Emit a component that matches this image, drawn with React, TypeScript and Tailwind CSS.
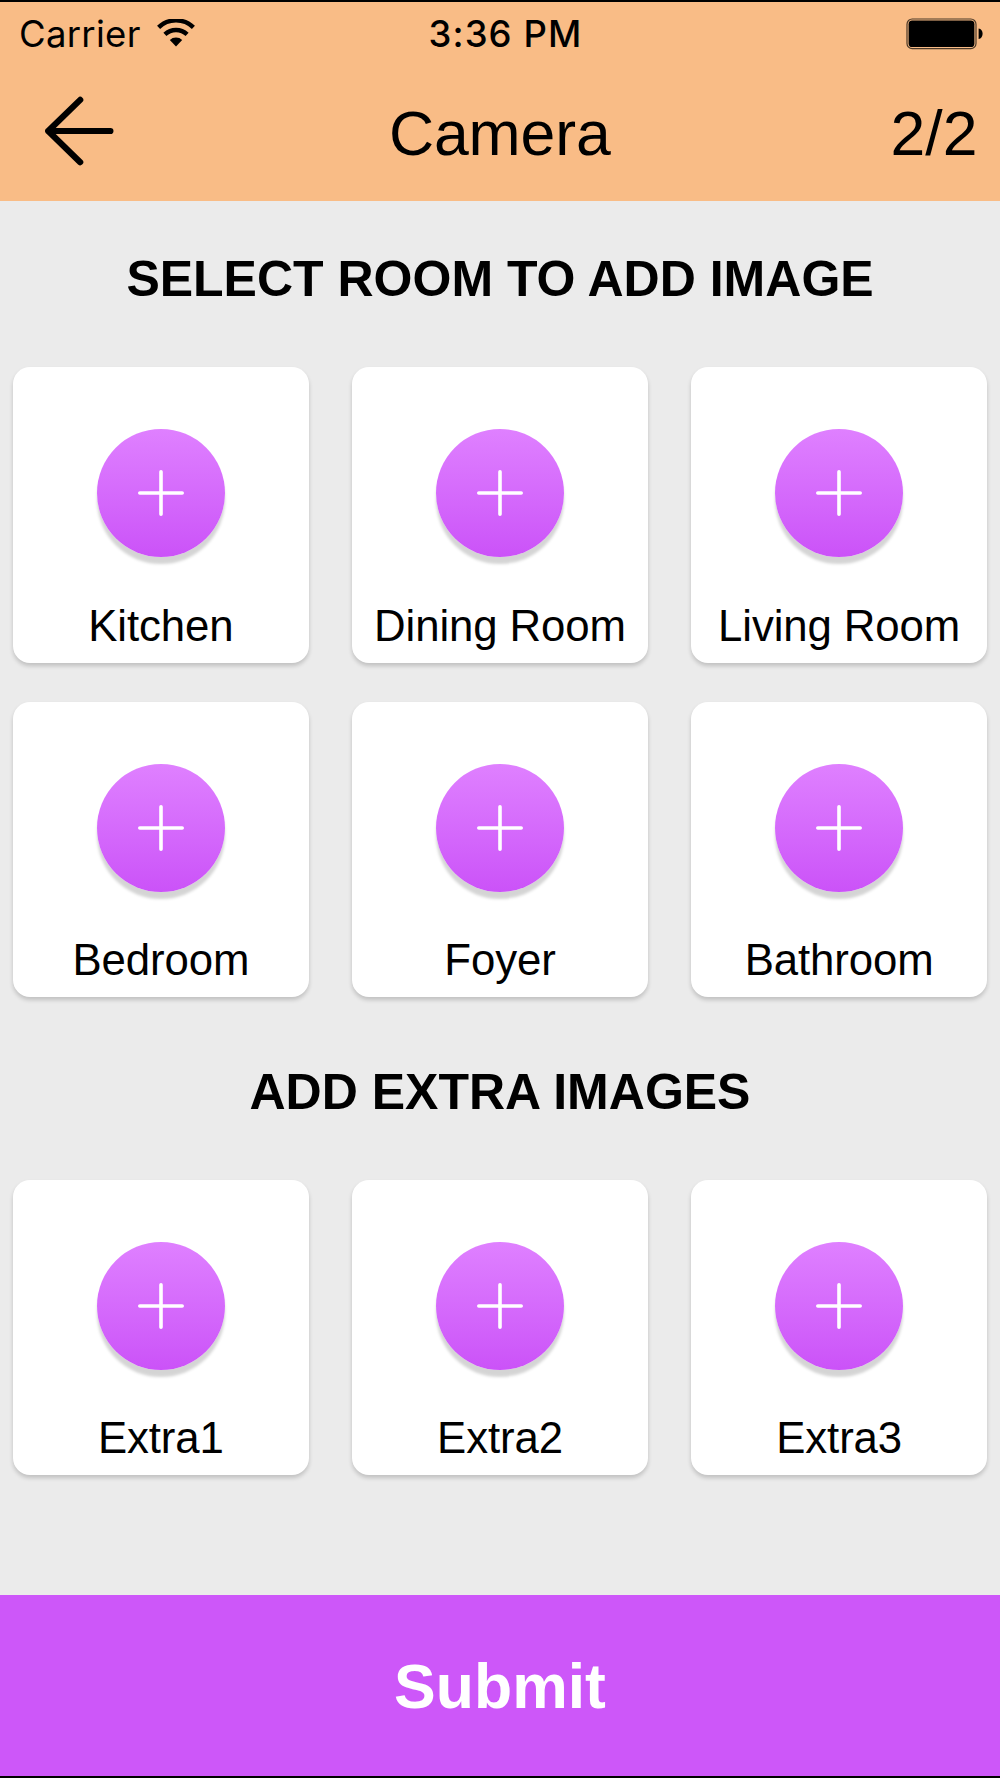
import { clsx } from "clsx";

const rooms = ["Kitchen", "Dining Room", "Living Room", "Bedroom", "Foyer", "Bathroom"];
const extras = ["Extra1", "Extra2", "Extra3"];

function WifiIcon() {
  return (
    <svg width="38" height="29" viewBox="0 0 38 29" fill="none" aria-hidden="true">
      <path d="M1.600 8.400a25 25 0 0 1 34.800 0" stroke="#000" strokeWidth="4.4" />
      <path d="M7.900 15.400a16.200 16.200 0 0 1 22.200 0" stroke="#000" strokeWidth="4.4" />
      <path d="M12.800 21a9 9 0 0 1 12.400 0L19 27.600Z" fill="#000" />
    </svg>
  );
}

function BatteryIcon() {
  return (
    <svg width="78" height="32" viewBox="0 0 78 32" fill="none" aria-hidden="true">
      <rect x="1" y="1" width="69" height="29.6" rx="5.2" stroke="#4c3a29" strokeWidth="1.2" />
      <rect x="2.6" y="2.6" width="65.8" height="26.4" rx="3.6" fill="#000" />
      <path d="M72.600 10.500c2.600.4 4 2.600 4 5.200s-1.400 4.900-4 5.300Z" fill="#000" />
    </svg>
  );
}

function BackIcon() {
  return (
    <svg
      width="70"
      height="70"
      viewBox="0 0 70 70"
      fill="none"
      stroke="#000"
      strokeWidth="6.2"
      strokeLinecap="round"
      strokeLinejoin="round"
      aria-hidden="true"
    >
      <path d="M36.200 3.900 4.200 35l32 31.200M4.200 35h62.200" />
    </svg>
  );
}

function StatusBar() {
  return (
    <div className="grid h-[63px] grid-cols-3 items-center pr-[16px] pl-[19px] font-['Inter',sans-serif] text-[36.5px] leading-none">
      <div className="flex items-center gap-[16px]">
        <span className="pt-[2px] tracking-[0.3px]">Carrier</span>
        <WifiIcon />
      </div>
      <span className="pt-[2px] pl-[8px] text-center font-medium tracking-[1.1px]">3:36 PM</span>
      <div className="flex justify-end">
        <BatteryIcon />
      </div>
    </div>
  );
}

function Header() {
  return (
    <header className="h-[201px] border-t-2 border-black bg-[#f9bc86]">
      <StatusBar />
      <nav className="grid h-[136px] grid-cols-3 items-center pr-[22.5px] pl-[44px] text-[62.5px] leading-none">
        <button type="button" aria-label="Back" className="mb-[4px] w-fit">
          <BackIcon />
        </button>
        <h1 className="-ml-[22px] text-center tracking-[-0.1px]">Camera</h1>
        <span className="text-right">2/2</span>
      </nav>
    </header>
  );
}

function RoomCard({ label }: { label: string }) {
  return (
    <button
      type="button"
      className="flex h-[295.5px] flex-col items-center rounded-[17px] bg-white pt-[62px] shadow-[0_3px_4px_rgba(0,0,0,0.18)]"
    >
      <span className="flex size-[128px] items-center justify-center rounded-full bg-linear-to-b from-[#df80ff] to-[#cb52f8] shadow-[0_7px_3px_rgba(0,0,0,0.17)]">
        <svg
          width="48"
          height="48"
          viewBox="0 0 48 48"
          stroke="#fff"
          strokeWidth="3.6"
          strokeLinecap="round"
          aria-hidden="true"
        >
          <path d="M24 2.800v42.400M2.800 24h42.400" />
        </svg>
      </span>
      <span className="mt-[42.5px] text-[43.75px] leading-[52px] tracking-[-0.1px] whitespace-nowrap">{label}</span>
    </button>
  );
}

function RoomSection({ title, items, className }: { title: string; items: string[]; className?: string }) {
  return (
    <section className={clsx("px-[13px]", className)}>
      <h2 className="text-center text-[50px] leading-[52px] font-bold">{title}</h2>
      <div className="mt-[62px] grid grid-cols-3 gap-x-[43.5px] gap-y-[39px]">
        {items.map((item) => (
          <RoomCard key={item} label={item} />
        ))}
      </div>
    </section>
  );
}

export default function App() {
  return (
    <div className="flex h-[1778px] w-[1000px] flex-col overflow-hidden bg-[#ebebeb] font-['Liberation_Sans',Arial,sans-serif] text-black">
      <Header />
      <main className="flex-1">
        <RoomSection title="SELECT ROOM TO ADD IMAGE" items={rooms} className="pt-[52px]" />
        <RoomSection title="ADD EXTRA IMAGES" items={extras} className="pt-[68.5px]" />
      </main>
      <button
        type="button"
        className="h-[183px] shrink-0 border-b-2 border-black bg-[#cd57f9] pt-[2px] text-[62.5px] leading-none font-bold text-white"
      >
        Submit
      </button>
    </div>
  );
}
